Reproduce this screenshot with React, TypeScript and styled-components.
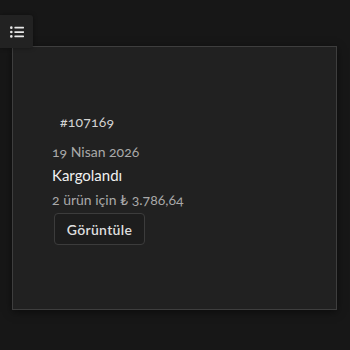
import React from "react";
import styled, { createGlobalStyle } from "styled-components";
import { FaListUl } from "react-icons/fa";

const Global = createGlobalStyle`
  html, body { margin: 0; padding: 0; background: #171717; }
  body { font-family: "Lato", "Open Sans", sans-serif; width: 350px; height: 350px; overflow: hidden; }
  * { box-sizing: border-box; }
`;

const Page = styled.div`
  width: 350px;
  height: 350px;
  padding: 46px 13px 0 12px;
`;

const MenuToggle = styled.button`
  position: fixed;
  top: 15px;
  left: 0;
  width: 33px;
  height: 33px;
  border: none;
  border-radius: 0 3px 3px 0;
  background: #222222;
  color: #e8e8e8;
  display: flex;
  align-items: center;
  justify-content: center;
  padding: 0;
  z-index: 2;
  box-shadow: 0 0 4px rgba(0, 0, 0, 0.4);
`;

const Card = styled.div`
  height: 264px;
  background: #212121;
  border: 1px solid #3e3e3e;
  box-shadow: 0 2px 8px rgba(0, 0, 0, 0.5);
  padding: 65px 20px 0 39px;
  display: flex;
  flex-direction: column;
  align-items: flex-start;
  font-variant-numeric: oldstyle-nums;
`;

const OrderNo = styled.div`
  font-size: 14px;
  line-height: 20px;
  color: #d2d2d2;
  margin-left: 8px;
  letter-spacing: 0.2px;
`;

const Line = styled.div<{ $top: number; $size?: number; $strong?: boolean }>`
  margin-top: ${(p) => p.$top}px;
  font-size: ${(p) => p.$size ?? 14}px;
  line-height: 20px;
  color: ${(p) => (p.$strong ? "#f0f0f0" : "#a9a9a9")};
`;

const ViewButton = styled.button`
  margin-top: 3px;
  margin-left: 2px;
  width: 91px;
  height: 32px;
  background: #1d1d1d;
  border: 1px solid #3c3c3c;
  border-radius: 4px;
  color: #dedede;
  font-family: "Lato", "Open Sans", sans-serif;
  font-size: 14px;
  font-weight: 600;
  letter-spacing: 0.3px;
  padding: 0;
`;

export default function App() {
  return (
    <>
      <Global />
      <MenuToggle aria-label="menu">
        <FaListUl size={14} />
      </MenuToggle>
      <Page>
        <Card>
          <OrderNo>#107169</OrderNo>
          <Line $top={10}>19 Nisan 2026</Line>
          <Line $top={3} $size={15} $strong>
            Kargolandı
          </Line>
          <Line $top={5}>2 ürün için ₺ 3.786,64</Line>
          <ViewButton>Görüntüle</ViewButton>
        </Card>
      </Page>
    </>
  );
}
